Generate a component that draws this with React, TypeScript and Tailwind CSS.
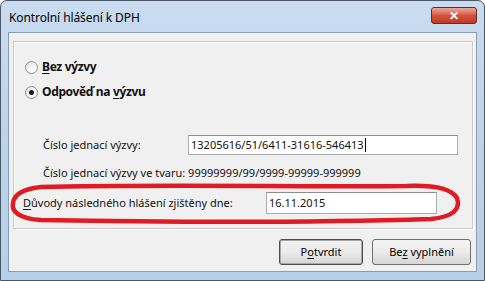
import React from "react";

const font = { fontFamily: '"Noto Sans", "Open Sans", sans-serif' };

function Radio({ checked }: { checked?: boolean }) {
  return (
    <span className="relative inline-flex h-[13px] w-[13px] items-center justify-center rounded-full border border-[#8e8f8f] bg-gradient-to-br from-[#dcdcdc] via-[#f6f6f6] to-white">
      {checked && <span className="h-[5px] w-[5px] rounded-full bg-[#1a1a1a]" />}
    </span>
  );
}

export default function App() {
  return (
    <div
      className="relative h-[281px] w-[485px] overflow-hidden rounded-t-[7px] border border-[#4a5766] bg-gradient-to-b from-[#c9dcf0] via-[#bcd3ec] to-[#b7cfe9] text-[11px] text-[#111111]"
      style={font}
    >
      {/* title bar */}
      <div className="flex h-[31px] items-start justify-between pl-[8px] pr-[7px]">
        <div className="mt-[8px] text-[12px] tracking-[-0.1px] text-black">Kontrolní hlášení k DPH</div>
        <div className="mt-[6px] flex h-[17px] w-[46px] items-center justify-center rounded-[3px] border border-[#6b2a24] bg-gradient-to-b from-[#e9a99c] via-[#d3533e] to-[#c23a22] text-[12px] font-bold leading-none text-white">
          ✕
        </div>
      </div>

      {/* client */}
      <div className="mx-[7px] flex h-[240px] flex-col border border-[#8b9bb0] bg-[#f0f0f0]">
        {/* group box */}
        <div className="ml-[4px] mt-[8px] h-[188px] w-[460px] border border-[#c9c9c9] shadow-[inset_1px_1px_0_#ffffff,1px_1px_0_#ffffff]">
          <div className="ml-[11px] mt-[17px] flex h-[16px] items-center gap-[3px] text-[12px] font-bold">
            <Radio />
            <span className="ml-[1px] tracking-[-0.35px]">
              <span className="underline underline-offset-2">B</span>ez výzvy
            </span>
          </div>
          <div className="ml-[11px] mt-[9px] flex h-[16px] items-center gap-[3px] text-[12px] font-bold">
            <Radio checked />
            <span className="ml-[1px] tracking-[-0.35px]">
              Odpověď na <span className="underline underline-offset-2">v</span>ýzvu
            </span>
          </div>

          <div className="ml-[29px] mt-[35px] flex h-[20px] items-center">
            <span className="w-[145px]">Číslo jednací výzvy:</span>
            <div className="flex h-[20px] w-[270px] items-center border border-[#abadb3] border-t-[#8a8d94] bg-white pl-[2px]">
              <span>13205616/51/6411-31616-546413</span>
              <span className="ml-[1px] h-[14px] w-px bg-black" />
            </div>
          </div>

          <div className="ml-[29px] mt-[10px] flex h-[16px] items-center">
            Číslo jednací výzvy ve tvaru: 99999999/99/9999-99999-999999
          </div>

          <div className="ml-[9px] mt-[11px] flex h-[22px] items-center">
            <span className="w-[243px]">
              <span className="underline underline-offset-2">D</span>ůvody následného hlášení zjištěny dne:
            </span>
            <div className="flex h-[22px] w-[171px] items-center border border-[#abadb3] border-t-[#8a8d94] bg-white pl-[2px]">
              16.11.2015
            </div>
          </div>
        </div>

        {/* buttons */}
        <div className="mt-[10px] flex justify-end gap-[9px] pr-[5px]">
          <button className="h-[26px] w-[84px] rounded-[3px] border border-[#4d4d4d] bg-gradient-to-b from-[#f2f2f2] via-[#ebebeb] to-[#d6d6d6] text-[11px] text-black shadow-[inset_0_0_0_1px_#a8a8a8]">
            P<span className="underline underline-offset-2">o</span>tvrdit
          </button>
          <button className="h-[26px] w-[99px] rounded-[3px] border border-[#707070] bg-gradient-to-b from-[#f2f2f2] via-[#ebebeb] to-[#d6d6d6] text-[11px] text-black">
            Be<span className="underline underline-offset-2">z</span> vyplnění
          </button>
        </div>
      </div>

      {/* red hand-drawn ellipse overlay */}
      <svg className="pointer-events-none absolute left-0 top-0" width="485" height="281">
        <path
          d="M 40 186 C 150 183, 300 186, 405 185 C 430 184, 450 187, 456 197 C 460 208, 452 216, 430 218 C 300 222, 150 221, 40 219 C 18 218, 10 210, 12 202 C 13 193, 22 188, 40 186 Z"
          fill="none"
          stroke="#e01b24"
          strokeWidth="4.5"
        />
      </svg>
    </div>
  );
}
